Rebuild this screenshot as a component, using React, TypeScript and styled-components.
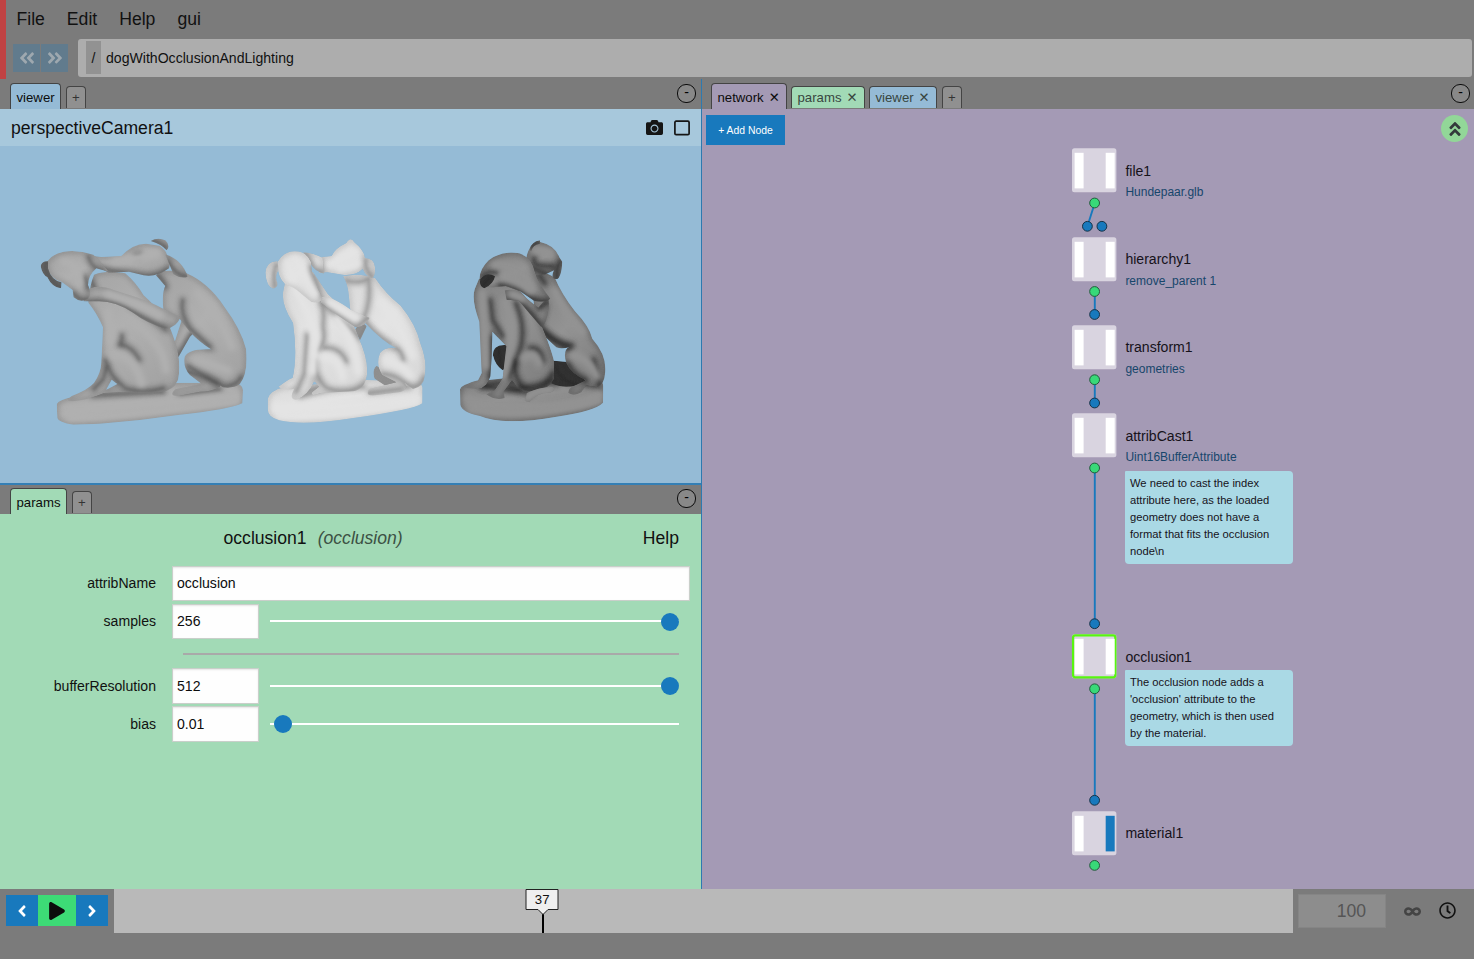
import React from "react";
import styled, { createGlobalStyle } from "styled-components";
import {
  FaAngleDoubleLeft,
  FaAngleDoubleRight,
  FaAngleDoubleUp,
  FaAngleLeft,
  FaAngleRight,
  FaCamera,
  FaInfinity,
  FaPlay,
  FaRegClock,
} from "react-icons/fa";

const BLUE = "#1879bd";
const VIEWER = "#95bbd6";
const PARAMS = "#a2dab6";
const NETWORK = "#a49ab5";

const GlobalStyle = createGlobalStyle`
  * { box-sizing: border-box; }
  html, body { margin: 0; padding: 0; }
  body {
    background: #7b7b7b;
    color: #111;
    font-family: "Liberation Sans", Arial, sans-serif;
    font-size: 14.08px;
    overflow: hidden;
  }
  button, input { font-family: inherit; margin: 0; }
`;

const Page = styled.div`
  width: 1474px;
  height: 959px;
  display: flex;
  flex-direction: column;
  background: #7b7b7b;
`;

/* ---------- top ---------- */

const TopBar = styled.header`
  height: 79px;
  border-left: 6px solid #c04243;
  display: flex;
  flex-direction: column;
`;

const MenuRow = styled.nav`
  height: 39px;
  display: flex;
  align-items: center;
  gap: 22px;
  padding: 0 0 1px 10.5px;
  font-size: 17.6px;
`;

const PathRow = styled.div`
  height: 38px;
  display: flex;
  align-items: center;
  padding: 0 2px 0 7px;
`;

const HistoryButton = styled.button`
  width: 27px;
  height: 28px;
  margin-right: 1px;
  padding: 0;
  border: 0;
  background: #617b8d;
  color: #9ea8af;
  display: flex;
  align-items: center;
  justify-content: center;
  font-size: 18px;
`;

const Breadcrumb = styled.div`
  flex: 1;
  height: 38px;
  margin-left: 9px;
  padding: 2px 8px;
  display: flex;
  align-items: flex-start;
  gap: 5px;
  border-radius: 3px;
  background: #adadad;
  line-height: 34px;
`;

const Slash = styled.span`
  width: 15px;
  height: 33px;
  text-align: center;
  background: #929292;
`;

/* ---------- panels ---------- */

const Main = styled.main`
  height: 810px;
  display: flex;
`;

const LeftColumn = styled.div`
  width: 702px;
  border-right: 1px solid #2d7ab0;
  display: flex;
  flex-direction: column;
`;

const RightColumn = styled.div`
  flex: 1;
  display: flex;
  flex-direction: column;
`;

const TabBar = styled.div<{ $height: number; $left: number; $right: number }>`
  height: ${(p) => p.$height}px;
  padding: 0 ${(p) => p.$right}px 0 ${(p) => p.$left}px;
  display: flex;
  align-items: flex-end;
  flex-shrink: 0;
`;

const Tab = styled.div<{ $color: string; $active?: boolean; $width: number }>`
  width: ${(p) => p.$width}px;
  height: ${(p) => (p.$active ? 26 : 22)}px;
  margin-right: 4px;
  margin-bottom: ${(p) => (p.$active ? 0 : 1)}px;
  padding-left: 5.5px;
  padding-top: ${(p) => (p.$active ? 2 : 0)}px;
  display: flex;
  align-items: center;
  gap: 5px;
  border: 1px solid #444;
  border-bottom-width: 0;
  border-radius: 4px 4px 0 0;
  background: ${(p) => p.$color};
  color: ${(p) => (p.$active ? "#0c0c0c" : "#38463f")};
  font-size: 13.2px;
  white-space: nowrap;
`;

const AddTab = styled(Tab)`
  margin-left: 0.5px;
  padding-left: 0;
  justify-content: center;
  background: #909090;
  color: #333;
`;

const Close = styled.span`
  font-family: "DejaVu Sans", sans-serif;
  font-size: 13.2px;
  line-height: 14px;
`;

const Minimize = styled.button`
  width: 19px;
  height: 19px;
  margin: 0 0 6px auto;
  padding: 0 0 3px;
  border: 1px solid #0c0c0c;
  border-radius: 9px;
  background: #888;
  color: #000;
  font-size: 14px;
  line-height: 13px;
`;

const ViewerHeader = styled.div`
  height: 37px;
  padding: 1px 11px 0;
  display: flex;
  align-items: center;
  background: #a7c8dc;
  font-size: 17.6px;
`;

const ViewerTools = styled.div`
  margin-left: auto;
  margin-top: -1px;
  display: flex;
  align-items: center;
  gap: 11px;
`;

const ViewerTool = styled.svg`
  display: block;
  width: 16px;
  height: 16px;
`;

const Scene = styled.div`
  height: 339px;
  flex-shrink: 0;
  background: ${VIEWER};
  border-bottom: 2px solid #347fb5;
  svg { display: block; }
`;

/* ---------- params ---------- */

const ParamsBody = styled.section`
  flex: 1;
  padding: 9px 11px 0 13px;
  background: ${PARAMS};
`;

const ParamsHeader = styled.div`
  height: 31px;
  display: flex;
  align-items: center;
  padding: 0 11px 0 210.5px;
  font-size: 17.6px;
`;

const NodeType = styled.em`
  margin-left: 11px;
  color: #3c5144;
`;

const HelpLink = styled.span`
  margin-left: auto;
`;

const Rows = styled.div`
  margin-top: 12px;
`;

const Row = styled.div`
  height: 38px;
  display: grid;
  grid-template-columns: 143px 518px;
  column-gap: 16px;
`;

const Label = styled.label<{ $low?: boolean }>`
  text-align: right;
  line-height: ${(p) => (p.$low ? 37 : 35)}px;
`;

const Fields = styled.div`
  display: flex;
`;

const Field = styled.input<{ $width: number; $low?: boolean }>`
  width: ${(p) => p.$width}px;
  height: ${(p) => (p.$low ? 36 : 35)}px;
  padding: 0 4px ${(p) => (p.$low ? 0 : 1)}px;
  border: 1px solid #c9cfca;
  border-radius: 0;
  background: #fefefe;
  color: #0c0c0c;
  font-size: 14.08px;
  outline: 0;
  box-shadow: inset 0 1px 2px rgba(10, 10, 10, 0.1);
`;

const Track = styled.div<{ $low?: boolean }>`
  width: 409px;
  height: ${(p) => (p.$low ? 36 : 35)}px;
  margin-left: 11px;
  display: flex;
  align-items: center;
  background: linear-gradient(#fff, #fff) 0 ${(p) => (p.$low ? 17 : 16)}px / 100% 2px no-repeat;
`;

const Knob = styled.span`
  width: 18px;
  height: 18px;
  border-radius: 50%;
  background: ${BLUE};
`;

const Separator = styled.hr`
  width: 496px;
  height: 2px;
  margin: 11px 11px 13px auto;
  border: 0;
  background: #a9a9a9;
`;

/* ---------- network ---------- */

const Network = styled.section`
  position: relative;
  flex: 1;
  background: ${NETWORK};
`;

const NetworkTools = styled.div`
  display: flex;
  justify-content: space-between;
  padding: 6px 6px 0 4px;
`;

const AddNode = styled.button`
  width: 79px;
  height: 30px;
  padding: 0;
  border: 0;
  background: ${BLUE};
  color: #fff;
  font-size: 10.4px;
`;

const Collapse = styled.button`
  width: 27px;
  height: 27px;
  padding: 1px 0 0;
  border: 0;
  border-radius: 50%;
  background: #92d798;
  color: #333a3b;
  display: flex;
  align-items: center;
  justify-content: center;
  font-size: 18px;
`;

const Wires = styled.svg`
  position: absolute;
  left: 0;
  top: 0;
`;

const NodeGroup = styled.div<{ $y: number }>`
  position: absolute;
  left: 370.3px;
  top: ${(p) => p.$y}px;
  display: flex;
  align-items: flex-start;
  gap: 8.7px;
`;

const NodeBoxSvg = styled.svg`
  display: block;
  width: 44.4px;
  height: 44.4px;
  overflow: visible;
`;

const NodeText = styled.div`
  padding-top: 14.1px;
  line-height: 17px;
  color: #16121a;
`;

const SubText = styled.div`
  margin-top: 5.7px;
  color: #17466b;
  font-size: 12px;
  line-height: 15px;
`;

const Note = styled.div<{ $gap: number }>`
  width: 168px;
  margin-top: ${(p) => p.$gap}px;
  padding: 4px 4.6px;
  border-radius: 1px 4px 4px 4px;
  background: #aad9e5;
  font-size: 11.2px;
  line-height: 17px;
  white-space: pre;
`;

/* ---------- timeline ---------- */

const Bottom = styled.footer`
  height: 70px;
  display: flex;
  align-items: flex-start;
`;

const Transport = styled.div`
  width: 114px;
  padding: 6px;
  display: flex;
`;

const TransportButton = styled.button<{ $play?: boolean }>`
  width: ${(p) => (p.$play ? 38 : 32)}px;
  height: 31px;
  padding: 0;
  border: 0;
  background: ${(p) => (p.$play ? "#3ddb76" : BLUE)};
  color: ${(p) => (p.$play ? "#0c0c0c" : "#fff")};
  font-size: 18px;
  display: flex;
  align-items: center;
  justify-content: center;
`;

const Timeline = styled.div`
  position: relative;
  width: 1179px;
  height: 44px;
  background: #b9b9b9;
`;

const Marker = styled.svg`
  position: absolute;
  left: 411px;
  top: 0;
`;

const FrameField = styled.div`
  width: 88px;
  height: 34px;
  margin: 5px 0 0 5px;
  padding-right: 19px;
  border: 1px solid #858585;
  background: #8d8d8d;
  color: #555;
  font-size: 17.6px;
  line-height: 33px;
  text-align: right;
`;

const LoopIcon = styled.span`
  height: 44px;
  margin-left: 18px;
  display: flex;
  align-items: center;
  font-size: 17px;
  color: #444;
`;

const ClockIcon = styled(LoopIcon)`
  color: #111;
  height: 43px;
`;

type NodeDef = {
  name: string;
  y: number;
  sub?: string;
  note?: string;
  noteGap?: number;
  selected?: boolean;
  display?: boolean;
};

const nodes: NodeDef[] = [
  { name: "file1", y: 39.45, sub: "Hundepaar.glb" },
  { name: "hierarchy1", y: 127.8, sub: "remove_parent 1" },
  { name: "transform1", y: 216.2, sub: "geometries" },
  {
    name: "attribCast1",
    y: 304.45,
    sub: "Uint16BufferAttribute",
    note: "We need to cast the index\nattribute here, as the loaded\ngeometry does not have a\nformat that fits the occlusion\nnode\\n",
    noteGap: 6,
  },
  {
    name: "occlusion1",
    y: 525.45,
    note: "The occlusion node adds a\n'occlusion' attribute to the\ngeometry, which is then used\nby the material.",
    noteGap: 4.1,
    selected: true,
  },
  { name: "material1", y: 702.2, display: true },
];

function NodeBox({ selected, display }: { selected?: boolean; display?: boolean }) {
  return (
    <NodeBoxSvg viewBox="0 0 44.4 44.4">
      <rect y=".2" width="44.4" height="44" rx="2.5" fill="#d9d4e0" />
      {selected && <rect x="1.1" y="1.3" width="42.2" height="42" rx="2" fill="none" stroke="#58f510" strokeWidth="2.3" />}
      <rect x="2.6" y="4.8" width="9" height="35.6" fill="#fff" />
      <rect x="33.7" y="4.8" width="9" height="35.6" fill={display ? BLUE : "#fff"} />
    </NodeBoxSvg>
  );
}

type StatueColors = { id: string; light: string; mid: string; dark: string; deep: string };

const grey: StatueColors = { id: "grey", light: "#b0b0b0", mid: "#a2a2a2", dark: "#626262", deep: "#303030" };
const white: StatueColors = { id: "white", light: "#e4e4e4", mid: "#d8d8d8", dark: "#909090", deep: "#606060" };
const lit: StatueColors = { id: "lit", light: "#939393", mid: "#7e7e7e", dark: "#323232", deep: "#191919" };

type Part = { d: string; shade: string[]; shine?: string[]; fill?: "mid" | "dark" };

function Statue({ x, colors, parts }: { x: number; colors: StatueColors; parts: Part[] }) {
  const { id, light, mid, dark, deep } = colors;
  return (
    <g transform={`translate(${x} 220) scale(.33333)`}>
      <defs>
        <linearGradient id={`${id}-body`} x1="0" y1="0" x2=".75" y2="1">
          <stop offset="0" stopColor={mid} />
          <stop offset=".5" stopColor={light} />
          <stop offset="1" stopColor={mid} />
        </linearGradient>
        <filter id={`${id}-soft`} filterUnits="userSpaceOnUse" x="0" y="0" width="740" height="680">
          <feGaussianBlur stdDeviation="8" />
        </filter>
        <filter id={`${id}-edge`} filterUnits="userSpaceOnUse" x="0" y="0" width="740" height="680">
          <feGaussianBlur stdDeviation="2.6" />
        </filter>
        {parts.map((part, i) => (
          <clipPath id={`${id}-clip-${i}`} key={i}>
            <path d={part.d} />
          </clipPath>
        ))}
      </defs>
      {parts.map((part, i) => (
        <g key={i} clipPath={`url(#${id}-clip-${i})`}>
          <path d={part.d} fill={part.fill === "dark" ? dark : `url(#${id}-body)`} />
          <path d={part.d} fill="none" stroke={dark} strokeWidth="12" opacity=".38" filter={`url(#${id}-soft)`} />
          {part.shade.map((d, j) => (
            <g key={j} fill="none" strokeLinecap="round">
              <path d={d} stroke={dark} strokeWidth="20" opacity=".65" filter={`url(#${id}-soft)`} />
              <path d={d} stroke={deep} strokeWidth="4" opacity=".28" filter={`url(#${id}-edge)`} />
            </g>
          ))}
          {part.shine?.map((d, j) => (
            <path key={j} d={d} fill="none" stroke={light} strokeWidth="24" strokeLinecap="round" filter={`url(#${id}-soft)`} />
          ))}
        </g>
      ))}
    </g>
  );
}

const statueOne: Part[] = [
  {
    d: "M110 552 Q118 538 160 530 L250 510 L480 488 L640 488 Q669 492 669 510 L667 550 Q620 570 480 584 Q360 602 240 611 L160 614 Q114 607 112 594Z",
    shade: ["M220 526 L430 516 M480 523 L600 508"],
    shine: ["M140 566 Q370 558 650 528", "M150 594 Q370 585 650 545"],
  },
  {
    d: "M485 300 L530 330 L510 350 L475 412 L460 378Z",
    shade: ["M516 341 L475 407"],
  },
  {
    d: "M408 166 Q432 140 500 160 Q565 188 613 260 Q663 327 678 386 Q686 458 659 493 Q640 506 609 502 Q584 488 553 466 Q605 490 600 500 Q575 515 540 515 L474 528 Q444 528 466 508 L545 492 L510 465 Q488 441 494 410 Q507 384 573 388 Q537 365 510 336 L480 298 L430 270 Q425 216 436 198Z",
    shade: ["M488 240 Q480 282 510 325 L570 380", "M500 456 Q535 460 612 499 Q650 498 664 470", "M505 438 Q548 466 592 490", "M413 166 Q430 180 436 201"],
    shine: ["M532 220 Q600 290 635 380", "M529 418 Q568 430 625 452"],
  },
  {
    d: "M205 240 Q210 195 222 164 Q260 149 316 160 Q348 187 371 226 Q438 286 457 341 Q487 417 474 480 Q461 512 424 515 L298 517 L252 519 Q204 540 158 544 Q132 544 155 528 Q204 509 222 489 Q243 457 244 428 L249 322 Q231 280 205 248Z M292 492 L275 479 L258 510Z",
    shade: ["M210 178 Q225 200 230 225", "M306 345 Q308 360 302 372", "M256 420 Q269 470 318 506 Q374 522 431 504", "M302 374 Q336 378 358 420", "M260 440 L250 478 L221 508", "M336 259 Q376 280 438 330"],
    shine: ["M346 314 Q431 370 438 450", "M280 404 Q342 405 365 490", "M266 274 L271 362"],
  },
  {
    d: "M210 205 Q240 194 281 210 L330 226 Q390 244 433 268 L482 292 Q468 324 438 326 Q383 312 337 277 Q281 239 225 244 L190 244Z",
    shade: ["M202 246 Q278 236 337 275 Q396 308 438 326"],
    shine: ["M264 222 Q350 246 419 286"],
  },
  {
    d: "M192 98 Q220 110 244 111 L304 108 Q339 70 379 71 L419 77 Q439 91 442 107 Q455 120 447 145 Q408 173 371 166 L327 155 L267 158 Q240 146 226 128Z",
    shade: ["M345 104 Q355 110 360 101", "M230 143 Q326 162 381 168 Q417 167 443 146"],
    shine: ["M285 122 Q363 115 408 100"],
  },
  { d: "M392 63 Q414 50 436 61 Q453 78 440 91 Q424 72 392 63Z", shade: ["M397 63 Q430 70 438 87"] },
  { d: "M436 103 Q487 119 503 170 Q485 178 460 162Z", shade: ["M444 124 Q463 160 499 171"] },
  {
    d: "M82 124 Q98 101 131 95 Q176 89 220 104 Q249 130 266 155 L229 145 Q204 167 204 195 Q216 218 204 236 Q182 250 161 232 L158 210 L125 186 Q93 180 82 145Z",
    shade: ["M205 110 Q215 145 248 153", "M161 220 Q180 246 204 237", "M195 170 L204 205"],
    shine: ["M130 125 Q178 128 178 192"],
  },
  { d: "M84 124 Q65 123 62 138 Q67 165 82 171 Q96 202 123 205 L125 187 Q94 182 84 145Z", shade: ["M80 127 Q68 151 94 178 Q108 197 122 201"], fill: "dark" },
];

const statueTwo: Part[] = [
  {
    d: "M53 536 Q60 511 105 500 L350 480 L480 483 Q518 489 518 503 L517 550 Q488 570 310 594 Q159 618 88 601 Q53 592 53 567Z",
    shade: ["M150 528 Q230 500 340 500 M360 515 Q430 508 480 500", "M152 516 L210 502"],
    shine: ["M78 561 Q290 570 502 535", "M88 588 Q290 594 502 548"],
  },
  { d: "M380 437 Q364 452 374 476 L410 500 L446 490Z", shade: ["M388 440 L438 484"], fill: "dark" },
  { d: "M331 302 L350 319 L330 361 L315 330Z", shade: ["M346 319 L329 353"], fill: "dark" },
  {
    d: "M279 169 Q330 157 376 175 Q407 222 452 257 Q498 313 511 370 Q533 427 524 467 Q521 500 489 507 L464 488 Q478 508 451 516 L375 526 Q342 529 359 507 L439 487 L397 465 Q376 435 390 399 Q404 381 438 384 Q400 366 346 309 L302 282 L297 233 Q293 188 279 169Z",
    shade: ["M290 182 Q330 192 356 176 Q364 240 342 294 Q354 330 420 372", "M398 462 Q438 461 480 500 Q510 506 523 472", "M436 384 Q456 390 460 420", "M356 519 L455 506"],
    shine: ["M392 246 Q450 315 488 408", "M410 420 Q460 436 480 466"],
  },
  {
    d: "M105 188 Q134 162 188 155 L234 223 Q305 286 325 351 Q358 423 350 470 Q341 510 306 514 L212 519 Q178 532 187 516 L207 500 L193 483 Q175 526 138 540 Q115 538 133 506 Q100 512 85 501 Q109 481 128 473 Q143 407 129 309 Q90 249 101 207Z M192 462 L205 481 L184 490Z",
    shade: ["M190 165 Q229 250 219 320 Q229 368 204 391", "M196 420 Q194 473 230 504 Q294 528 348 490", "M171 344 L163 460 L139 516", "M216 249 Q290 312 329 353", "M223 383 Q270 380 290 425"],
    shine: ["M260 297 Q314 359 325 455", "M221 411 Q265 408 278 472", "M138 209 Q183 283 196 350 L187 455"],
  },
  {
    d: "M216 230 Q250 230 303 270 L359 294 Q343 323 316 321 L247 275 L212 247Z",
    shade: ["M215 252 Q272 292 316 323 L358 290"],
    shine: ["M241 246 L317 292"],
  },
  {
    d: "M216 111 L245 108 Q253 86 289 69 Q302 48 313 67 Q342 91 345 114 Q373 116 375 141 Q377 169 366 175 Q349 171 338 147 Q315 168 278 164 L232 157 L206 159Z",
    shade: ["M347 120 Q342 141 366 171", "M206 115 L218 157"],
    shine: ["M258 125 L316 96", "M270 145 L320 130"],
  },
  { d: "M159 97 Q182 97 218 113 L222 161 Q194 154 183 133Z", shade: ["M163 99 Q180 114 190 149 L219 157"] },
  {
    d: "M84 124 Q102 93 136 94 Q170 94 183 126 Q184 176 218 235 Q211 252 184 246 L151 219 Q127 198 105 193 Q79 167 84 124Z",
    shade: ["M184 141 Q189 181 215 228"],
    shine: ["M115 127 L130 175", "M135 117 Q156 160 195 223"],
  },
  { d: "M83 124 Q50 122 46 158 Q49 201 70 206 Q88 199 80 183 Q75 163 86 150Z", shade: ["M80 134 Q66 153 75 201"] },
];

const statueThree: Part[] = [
  {
    d: "M60 508 Q64 493 110 484 L303 463 L446 461 Q488 466 490 500 L489 548 Q464 574 350 590 Q190 618 120 588 Q66 577 61 555Z",
    shade: ["M129 500 Q209 474 350 490 M210 502 L270 520 M364 480 L475 499", "M120 495 Q190 510 240 510"],
    shine: ["M82 535 Q120 557 237 560 Q385 560 480 525", "M92 570 Q290 597 477 542"],
  },
  { d: "M199 375 Q158 373 159 406 Q165 435 188 451 L230 422Z", shade: ["M175 385 L183 441"], fill: "dark" },
  { d: "M315 420 L386 426 L440 486 Q378 513 330 488Z", shade: ["M348 441 Q359 482 410 494"], fill: "dark" },
  {
    d: "M284 160 Q320 154 345 174 Q364 221 405 274 Q448 319 457 356 Q500 404 496 455 Q493 496 471 501 L438 496 L424 517 Q402 530 385 519 Q384 503 407 495 L437 481 Q391 460 379 430 Q367 391 388 381 Q365 388 349 382 L296 332 L280 243Z",
    shade: ["M299 167 L315 190", "M315 260 Q305 300 298 319 Q328 360 389 385", "M384 431 Q399 465 437 481", "M304 330 Q348 372 395 376", "M461 418 Q473 449 478 497"],
    shine: ["M344 211 Q381 293 426 335", "M401 405 Q447 419 471 470"],
  },
  {
    d: "M117 176 Q168 184 222 191 L280 258 Q330 371 343 427 L342 477 Q327 508 285 512 Q241 522 216 481 L191 515 L194 534 Q165 543 139 523 L164 511 L188 475 L199 379 L157 335 L155 410 L151 469 Q142 504 113 507 L75 503 Q82 487 114 481 L125 459 L118 305 Q94 242 104 208Z",
    shade: ["M228 250 Q255 310 245 370 Q235 410 206 472", "M225 423 Q217 464 251 505 Q308 525 338 460", "M150 240 L158 300 L188 348", "M156 353 L151 474", "M270 384 Q304 380 309 425", "M240 500 Q280 508 335 480"],
    shine: ["M127 220 L136 439", "M251 414 Q281 390 298 432", "M195 245 Q222 310 212 370 L190 470"],
  },
  { d: "M260 519 Q300 500 337 501 Q353 509 330 518 Q290 517 268 547 L256 543Z", shade: [], shine: ["M263 535 Q279 510 333 510"] },
  {
    d: "M194 211 Q231 202 256 232 L295 263 L325 228 L327 253 Q320 316 304 321 L268 280 L237 242 L200 239Z",
    shade: ["M202 242 Q250 235 301 320", "M298 263 L321 247"],
    shine: ["M216 223 L248 235"],
  },
  {
    d: "M260 108 Q269 68 301 66 Q345 76 358 112 L367 126 Q364 173 350 178 Q330 176 342 151 L317 163 L280 166 L257 133Z",
    shade: ["M283 113 Q276 132 299 136 L340 139", "M361 124 Q350 136 350 174", "M275 143 L320 163"],
    shine: ["M285 90 L330 98"],
  },
  { d: "M269 88 Q275 65 300 61 L300 71 Q279 73 273 94Z", shade: ["M274 80 L294 67"] },
  {
    d: "M146 121 Q186 90 238 100 Q276 112 285 157 Q292 186 331 236 Q315 250 282 242 L241 214 L197 198 L160 202 Q121 203 118 178 Q120 145 146 121Z",
    shade: ["M180 196 Q228 210 244 219 Q288 249 328 245", "M128 171 Q145 150 170 158"],
    shine: ["M165 135 Q243 130 277 207", "M190 165 Q235 175 270 210"],
  },
  { d: "M121 178 Q139 153 165 169 Q160 194 133 205 Q116 200 121 178Z", shade: ["M128 199 Q148 167 161 170"], fill: "dark" },
];

function NumberRow({ label, value, position, low }: { label: string; value: string; position: number; low?: boolean }) {
  return (
    <Row>
      <Label $low={low}>{label}</Label>
      <Fields>
        <Field $width={87} $low={low} defaultValue={value} />
        <Track $low={low}>
          <Knob style={{ marginLeft: position }} />
        </Track>
      </Fields>
    </Row>
  );
}

export default function App() {
  return (
    <Page>
      <GlobalStyle />
      <TopBar>
        <MenuRow>
          <span>File</span>
          <span>Edit</span>
          <span>Help</span>
          <span>gui</span>
        </MenuRow>
        <PathRow>
          <HistoryButton><FaAngleDoubleLeft /></HistoryButton>
          <HistoryButton><FaAngleDoubleRight /></HistoryButton>
          <Breadcrumb>
            <Slash>/</Slash>
            <span>dogWithOcclusionAndLighting</span>
          </Breadcrumb>
        </PathRow>
      </TopBar>

      <Main>
        <LeftColumn>
          <TabBar $height={30} $left={10} $right={5}>
            <Tab $color={VIEWER} $active $width={51}>viewer</Tab>
            <AddTab $color="#909090" $width={20.5}>+</AddTab>
            <Minimize>-</Minimize>
          </TabBar>
          <ViewerHeader>
            perspectiveCamera1
            <ViewerTools>
              <FaCamera size={17} color="#151515" />
              <ViewerTool viewBox="0 0 16 16">
                <rect x=".9" y="1.2" width="14.2" height="13.4" rx="1.2" fill="none" stroke="#151515" strokeWidth="1.7" />
              </ViewerTool>
            </ViewerTools>
          </ViewerHeader>
          <Scene>
            <svg width="701" height="337" viewBox="0 146 701 337">
              <Statue x={20} colors={grey} parts={statueOne} />
              <Statue x={250} colors={white} parts={statueTwo} />
              <Statue x={440} colors={lit} parts={statueThree} />
            </svg>
          </Scene>
          <TabBar $height={29} $left={10} $right={5}>
            <Tab $color={PARAMS} $active $width={57}>params</Tab>
            <AddTab $color="#909090" $width={20.5}>+</AddTab>
            <Minimize>-</Minimize>
          </TabBar>
          <ParamsBody>
            <ParamsHeader>
              occlusion1
              <NodeType>(occlusion)</NodeType>
              <HelpLink>Help</HelpLink>
            </ParamsHeader>
            <Rows>
              <Row>
                <Label>attribName</Label>
                <Field $width={518} defaultValue="occlusion" />
              </Row>
              <NumberRow label="samples" value="256" position={391} />
              <Separator />
              <NumberRow label="bufferResolution" value="512" position={391} low />
              <NumberRow label="bias" value="0.01" position={3.5} low />
            </Rows>
          </ParamsBody>
        </LeftColumn>

        <RightColumn>
          <TabBar $height={30} $left={9} $right={4}>
            <Tab $color={NETWORK} $active $width={76}>network <Close>✕</Close></Tab>
            <Tab $color={PARAMS} $width={74}>params <Close>✕</Close></Tab>
            <Tab $color={VIEWER} $width={68}>viewer <Close>✕</Close></Tab>
            <AddTab $color="#909090" $width={20.5}>+</AddTab>
            <Minimize>-</Minimize>
          </TabBar>
          <Network>
            <NetworkTools>
              <AddNode>+ Add Node</AddNode>
              <Collapse><FaAngleDoubleUp /></Collapse>
            </NetworkTools>
            <Wires width="772" height="780" viewBox="702 109 772 780">
              <g stroke={BLUE} strokeWidth="1.9">
                <path d="M1094.8 203 L1087.4 226.3 M1094.8 291.5 V314.5 M1094.8 379.7 V403 M1094.8 468 V623.7 M1094.8 688.8 V800.3" />
              </g>
              <g fill={BLUE} stroke="#163247">
                {[314.5, 403, 623.7, 800.3].map((y) => <circle key={y} cx="1094.6" cy={y} r="4.9" />)}
                <circle cx="1087.4" cy="226.3" r="4.9" />
                <circle cx="1101.9" cy="226.3" r="4.9" />
              </g>
              <g fill="#38d978" stroke="#235a3c">
                {[203, 291.5, 379.7, 468, 688.8, 865.4].map((y) => <circle key={y} cx="1094.6" cy={y} r="4.9" />)}
              </g>
            </Wires>
            {nodes.map((node) => (
              <NodeGroup key={node.name} $y={node.y}>
                <NodeBox selected={node.selected} display={node.display} />
                <NodeText>
                  {node.name}
                  {node.sub && <SubText>{node.sub}</SubText>}
                  {node.note && <Note $gap={node.noteGap ?? 0}>{node.note}</Note>}
                </NodeText>
              </NodeGroup>
            ))}
          </Network>
        </RightColumn>
      </Main>

      <Bottom>
        <Transport>
          <TransportButton><FaAngleLeft /></TransportButton>
          <TransportButton $play><FaPlay /></TransportButton>
          <TransportButton><FaAngleRight /></TransportButton>
        </Transport>
        <Timeline>
          <Marker width="36" height="44" viewBox="0 0 36 44">
            <path d="M18 23 V44" stroke="#000" strokeWidth="2" />
            <path d="M1 .5 H33 V20.5 H23 L18 25.5 L13 20.5 H1Z" fill="#efefef" stroke="#222" />
            <text x="17.2" y="15" textAnchor="middle" fontSize="13.2" fill="#111">37</text>
          </Marker>
        </Timeline>
        <FrameField>100</FrameField>
        <LoopIcon><FaInfinity /></LoopIcon>
        <ClockIcon><FaRegClock /></ClockIcon>
      </Bottom>
    </Page>
  );
}
